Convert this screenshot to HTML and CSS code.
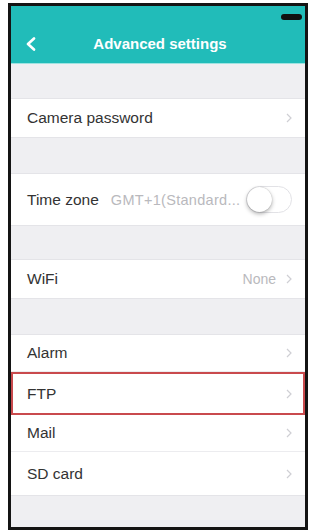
FILE: index.html
```html
<!DOCTYPE html>
<html lang="en">

<head>
    <meta charset="UTF-8">
    <meta name="viewport" content="width=device-width, initial-scale=1.0">
    <title>Advanced settings</title>
    <link rel="stylesheet" href="styles.css">
</head>

<body>
    <div class="phone">
        <div class="header">
            <div class="status-bar">
                <span class="battery"></span>
            </div>
            <div class="nav-bar">
                <svg class="back" width="12" height="14" viewBox="0 0 12 14">
                    <polyline points="9,1.5 3,7 9,12.5" fill="none" stroke="#fff" stroke-width="2.6"
                        stroke-linecap="round" stroke-linejoin="round" />
                </svg>
                <h1>Advanced settings</h1>
            </div>
        </div>

        <div class="gap"></div>
        <div class="group">
            <div class="row">
                <span class="label">Camera password</span>
                <svg class="chevron" width="6" height="10" viewBox="0 0 6 10">
                    <polyline points="1,1 5,5 1,9" fill="none" stroke="#cfcfd4" stroke-width="1.2" />
                </svg>
            </div>
        </div>

        <div class="gap gap-tz"></div>
        <div class="group">
            <div class="row row-tall">
                <span class="label">Time zone</span>
                <span class="value value-tz">GMT+1(Standard...</span>
                <span class="toggle"><span class="knob"></span></span>
            </div>
        </div>

        <div class="gap gap-short"></div>
        <div class="group">
            <div class="row">
                <span class="label">WiFi</span>
                <span class="value">None</span>
                <svg class="chevron" width="6" height="10" viewBox="0 0 6 10">
                    <polyline points="1,1 5,5 1,9" fill="none" stroke="#cfcfd4" stroke-width="1.2" />
                </svg>
            </div>
        </div>

        <div class="gap gap-wide"></div>
        <div class="group">
            <div class="row row-list">
                <span class="label">Alarm</span>
                <svg class="chevron" width="6" height="10" viewBox="0 0 6 10">
                    <polyline points="1,1 5,5 1,9" fill="none" stroke="#cfcfd4" stroke-width="1.2" />
                </svg>
            </div>
            <div class="row row-list row-marked">
                <span class="label">FTP</span>
                <svg class="chevron" width="6" height="10" viewBox="0 0 6 10">
                    <polyline points="1,1 5,5 1,9" fill="none" stroke="#cfcfd4" stroke-width="1.2" />
                </svg>
            </div>
            <div class="row row-list">
                <span class="label">Mail</span>
                <svg class="chevron" width="6" height="10" viewBox="0 0 6 10">
                    <polyline points="1,1 5,5 1,9" fill="none" stroke="#cfcfd4" stroke-width="1.2" />
                </svg>
            </div>
            <div class="row row-list row-high">
                <span class="label">SD card</span>
                <svg class="chevron" width="6" height="10" viewBox="0 0 6 10">
                    <polyline points="1,1 5,5 1,9" fill="none" stroke="#cfcfd4" stroke-width="1.2" />
                </svg>
            </div>
        </div>
        <div class="gap gap-end"></div>
    </div>
</body>

</html>
```

FILE: styles.css
```css
body,
html {
    margin: 0;
    padding: 0;
    background-color: #ffffff;
    font-family: "Liberation Sans", Arial, sans-serif;
}

.phone {
    margin: 3px 0 0 8px;
    width: 300px;
    height: 527px;
    box-sizing: border-box;
    border: 3px solid #141414;
    background-color: #efeff2;
    display: flex;
    flex-direction: column;
    overflow: hidden;
}

.header {
    background-color: #21bcb9;
    height: 57px;
    display: flex;
    flex-direction: column;
    border-bottom: 1px solid #9fe3e1;
    flex-shrink: 0;
}

.status-bar {
    height: 18px;
    display: flex;
    justify-content: flex-end;
    align-items: center;
    padding-right: 3px;
}

.battery {
    width: 21px;
    height: 6px;
    border-radius: 3px;
    background-color: #111;
    margin-top: 3px;
}

.nav-bar {
    flex: 1;
    display: flex;
    align-items: center;
    justify-content: center;
    position: relative;
}

.back {
    position: absolute;
    left: 14px;
    top: 13px;
}

.nav-bar h1 {
    margin: 0 0 0 4px;
    font-size: 15px;
    font-weight: bold;
    color: #ffffff;
}

.gap {
    height: 34px;
    flex-shrink: 0;
}

.gap-tz {
    height: 35px;
}

.gap-short {
    height: 33px;
}

.gap-wide {
    height: 35px;
}

.gap-end {
    flex: 1;
}

.group {
    background-color: #ffffff;
    border-top: 1px solid #e4e4e8;
    border-bottom: 1px solid #e4e4e8;
}

.row {
    height: 38px;
    display: flex;
    align-items: center;
    padding: 0 13px 0 16px;
    box-sizing: border-box;
}

.row-tall {
    height: 51px;
}

.row-list {
    height: 37px;
    border-bottom: 1px solid #ececef;
}

.row-high {
    height: 43px;
}

.row-list:last-child {
    border-bottom: none;
}

.row-marked {
    height: 43px;
    border: 2px solid #c94a4d;
    padding-left: 14px;
    padding-right: 11px;
}

.label {
    font-size: 15.5px;
    color: #333333;
    flex: 1;
}

.value {
    font-size: 14px;
    color: #b9b9bd;
    margin-right: 10px;
}

.value-tz {
    flex: 0 0 auto;
    margin-right: 0;
    font-size: 14.5px;
    letter-spacing: 0.3px;
}

.row-tall .label {
    flex: 0 0 auto;
    margin-right: 12px;
}

.chevron {
    flex-shrink: 0;
}

.toggle {
    margin-left: auto;
    width: 46px;
    height: 27px;
    border-radius: 14px;
    border: 1px solid #e2e2e6;
    box-sizing: border-box;
    background-color: #ffffff;
    display: flex;
    align-items: center;
}

.knob {
    width: 25px;
    height: 25px;
    border-radius: 50%;
    background-color: #ffffff;
    box-shadow: 0 2px 4px rgba(0, 0, 0, 0.3), 0 0 1px rgba(0, 0, 0, 0.3);
}
```
